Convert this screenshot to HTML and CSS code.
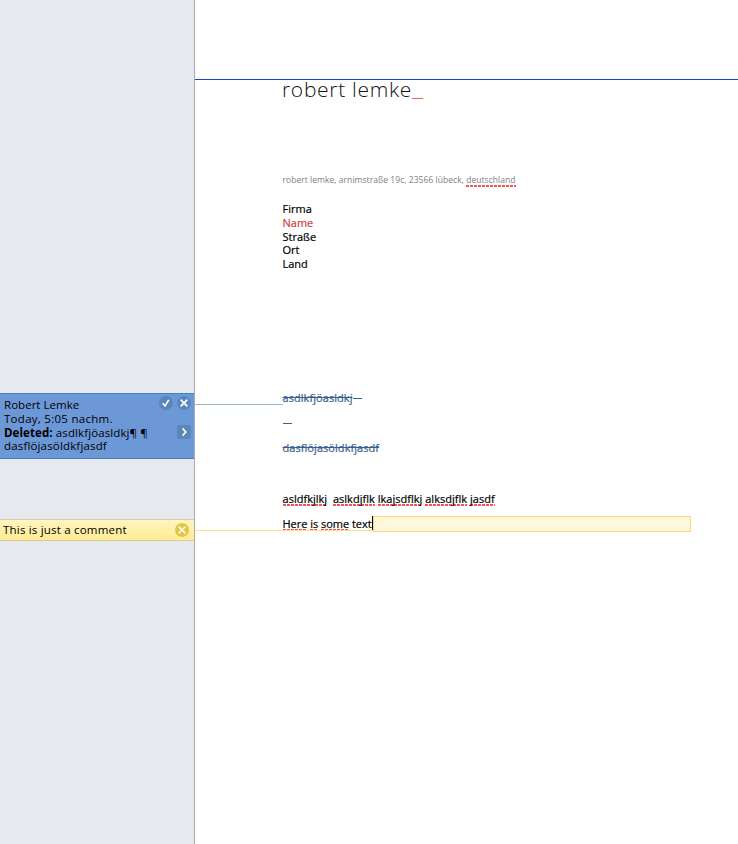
FILE: index.html
```html
<!DOCTYPE html>
<html lang="de">
<head>
<meta charset="utf-8">
<title>Letter</title>
<link rel="stylesheet" href="styles.css">
</head>
<body>
<div class="app">
  <aside class="sidebar">
    <section class="note change">
      <div class="note-text">
        <div class="l1">Robert Lemke</div>
        <div class="l2">Today, 5:05 nachm.</div>
        <div class="l3"><b>Deleted:</b> asdlkfjöasldkj¶ ¶</div>
        <div class="l4">dasflöjasöldkfjasdf</div>
      </div>
      <div class="note-actions">
        <svg width="14" height="14" viewBox="0 0 14 14"><circle cx="7" cy="7" r="7" fill="#5987b8"/><path d="M3.7 7.3 6 10 9.8 3.8" fill="none" stroke="#fff" stroke-width="1.6"/></svg>
        <svg width="14" height="14" viewBox="0 0 14 14"><circle cx="7" cy="7" r="7" fill="#5987b8"/><path d="M3.6 3.6 10.4 10.4M10.4 3.6 3.6 10.4" fill="none" stroke="#fff" stroke-width="1.7"/></svg>
        <svg class="more" width="14" height="14" viewBox="0 0 14 14"><rect width="14" height="14" rx="2" fill="#5987b8"/><path d="M5.6 3.4 8.8 7 5.6 10.6" fill="none" stroke="#fff" stroke-width="1.6"/></svg>
      </div>
    </section>
    <section class="note comment">
      <div class="comment-text">This is just a comment</div>
      <svg width="14" height="14" viewBox="0 0 14 14"><circle cx="7" cy="7" r="7" fill="#e2c544"/><path d="M3.6 3.6 10.4 10.4M10.4 3.6 3.6 10.4" fill="none" stroke="#fffbe0" stroke-width="1.6"/></svg>
    </section>
  </aside>
  <main class="page">
    <div class="link change-link"></div>
    <div class="link comment-link"></div>
    <header class="letterhead"><div class="logo">robert lemke<span class="cursor-mark"></span></div></header>
    <p class="sender">robert lemke, arnimstraße 19c, 23566 lübeck, <span class="sp">deutschland</span></p>
    <address class="recipient">
      <div>Firma</div><div class="red">Name</div><div>Straße</div><div>Ort</div><div>Land</div>
    </address>
    <p class="del d1">asdlkfjöasldkj<i class="tail"></i></p>
    <p class="del d2"><i class="tail"></i></p>
    <p class="del d3">dasflöjasöldkfjasdf</p>
    <p class="body b1"><span class="sp">asldfkjlkj</span>&nbsp; <span class="sp">aslkdjflk</span> <span class="sp">lkajsdflkj</span> <span class="sp">alksdjflk</span> <span class="sp">jasdf</span></p>
    <p class="body b2"><span class="b2-text"><span class="sp">Here</span> <span class="sp">is</span> <span class="sp">some</span> text</span><span class="caret"></span><span class="anchor"></span></p>
  </main>
</div>
</body>
</html>
```
FILE: styles.css
```css
* { box-sizing: border-box; }
body { margin: 0; background: #fff; color: #000; }
p { margin: 0; }
svg { display: block; }
.app { display: flex; width: 738px; height: 844px; overflow: hidden; }

.sidebar { width: 195px; padding-top: 393px; background: #e6eaef; border-right: 1px solid #a9abae; font: 11.5px/14px "Open Sans", sans-serif; flex: none; }
.note { display: flex; justify-content: space-between; }
.change { height: 66px; background: #6c98d8; border-top: 1px solid #477fc4; border-bottom: 1px solid #477fc4; padding: 4px 3px 0 4px; }
.note-text { white-space: nowrap; width: 150px; line-height: 13.8px; }
.note-text .l1 { letter-spacing: .03px; }
.note-text .l2 { letter-spacing: .28px; }
.note-text .l3 { letter-spacing: .1px; }
.note-text .l4 { letter-spacing: .16px; }
.note-actions { display: grid; grid-template-columns: 14px 14px; column-gap: 4px; row-gap: 15px; margin-top: -2px; align-content: start; }
.more { grid-column: 2; }
.comment { height: 22px; margin-top: 60px; align-items: center; padding: 0 5px 0 3px; background: linear-gradient(#fff4c0, #ffec94); border-top: 1px solid #d5cdae; border-bottom: 1px solid #d8cb94; }
.comment-text { white-space: nowrap; letter-spacing: .2px; }

.page { position: relative; flex: 1; padding: 79px 47px 0 87.5px; font: 500 11px/14px "Open Sans", sans-serif; white-space: nowrap; }
.link { position: absolute; left: 0; height: 1px; }
.change-link { top: 404px; width: 88px; background: #9db7d2; }
.comment-link { top: 530px; width: 178px; background: #ffdd80; }
.letterhead { height: 94px; margin: 0 -47px 0 -88px; padding-left: 87.5px; border-top: 1px solid #1744d8; }
.logo { font: 300 21px/20px "Open Sans", sans-serif; letter-spacing: .7px; color: #111; display: flex; margin-top: -1px; }
.cursor-mark { width: 11px; height: 1px; background: #ff5b50; margin: 19px 0 0; }
.sender { height: 29px; font-size: 8.5px; line-height: 14px; letter-spacing: .045px; color: #808080; }
.sp { background: repeating-linear-gradient(90deg, #f25555 0 3px, transparent 3px 4px) left bottom / 100% 2px no-repeat; display: inline-block; height: 13px; line-height: 12px; vertical-align: top; padding-top: 1px; box-sizing: content-box; }
.recipient { font-style: normal; line-height: 13.8px; height: 189px; -webkit-text-stroke: .2px currentColor; }
.red { color: #cc3f45; }
.del { color: #38618f; height: 25px; text-decoration: line-through; display: flex; letter-spacing: .06px; -webkit-text-stroke: .2px currentColor; }
.tail { width: 9px; height: 1px; background: #38618f; margin-top: 7px; }
.d3 { height: 51px; }
.b1 { height: 24px; letter-spacing: .02px; }
.b1, .b2-text { -webkit-text-stroke: .2px currentColor; }
.b2 { display: flex; height: 16px; }
.b2-text { width: 89.5px; padding-top: 1px; letter-spacing: -.03px; }
.caret { width: 1px; height: 14px; background: #000; }
.anchor { flex: 1; height: 16px; background: #fff7dc; border: 1px solid #ffda74; }
```
